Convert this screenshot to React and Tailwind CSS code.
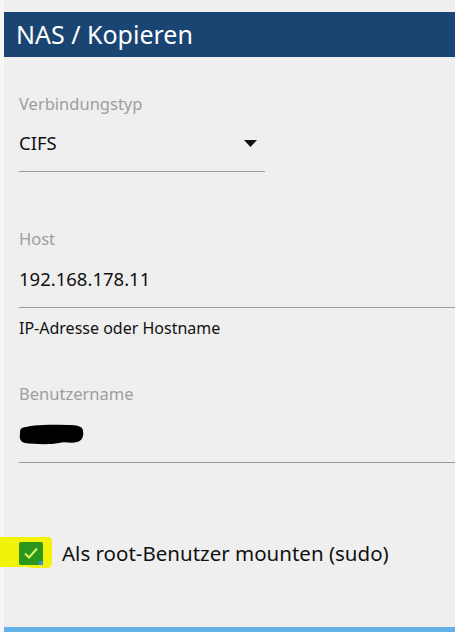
import { useState } from 'react'

const font = { fontFamily: '"Noto Sans", "Open Sans", sans-serif' }

function Field({ label, children, className = '' }) {
  return (
    <div className={className}>
      <div className="h-[20px] text-[16.5px] leading-[20px] text-[#9e9e9e]">{label}</div>
      {children}
    </div>
  )
}

export default function App() {
  const [asRoot, setAsRoot] = useState(true)

  return (
    <div className="h-[632px] w-full bg-[#f6f6f6] pl-[4px] overflow-hidden" style={font}>
      <div className="flex h-full flex-col bg-[#efefef] pt-[12px]">
        {/* Header */}
        <div className="flex h-[45px] items-center bg-[#1a4472] px-[12px] text-[25px] text-white">
          NAS / Kopieren
        </div>

        <div className="flex flex-col pl-[15px]">
          {/* Verbindungstyp */}
          <Field label="Verbindungstyp" className="mt-[37px]">
            <div className="mt-[17px] flex w-[246px] items-center justify-between border-b border-[#9a9a9a] pb-[16px] pr-[8px]">
              <span className="h-[24px] text-[18.5px] leading-[24px] text-[#111]">CIFS</span>
              <svg width="13" height="7" viewBox="0 0 13 7" aria-hidden="true">
                <path d="M0 0h13L6.5 7z" fill="#111" />
              </svg>
            </div>
          </Field>

          {/* Host */}
          <Field label="Host" className="mt-[57px]">
            <div className="mt-[18px] h-[41px] border-b border-[#9a9a9a] pb-[16px] text-[18.5px] leading-[24px] text-[#111]">
              192.168.178.11
            </div>
            <div className="mt-[10px] h-[20px] text-[16px] leading-[20px] text-[#111]">
              IP-Adresse oder Hostname
            </div>
          </Field>

          {/* Benutzername */}
          <Field label="Benutzername" className="mt-[46px]">
            <div className="mt-[18px] h-[41px] border-b border-[#9a9a9a] pb-[16px]">
              <svg width="66" height="24" viewBox="0 0 66 24" aria-hidden="true">
                <path
                  d="M3 6 C10 3 30 2 48 3 C58 3 64 4 64 9 C65 14 63 19 58 20 C52 22 46 19 40 21 C30 23 14 22 6 21 C2 20 0 17 1 12 C1 9 1 7 3 6 Z"
                  fill="#000"
                />
              </svg>
            </div>
          </Field>

          {/* Checkbox */}
          <label className="relative mt-[75px] flex h-[30px] cursor-pointer items-center">
            <span className="absolute left-[-19px] top-[-1px] h-[30px] w-[52px] rounded-r-[4px] bg-[#f2f20a]" />
            <span className="absolute left-[10px] top-[22px] h-[8px] w-[22px] rounded-b-[3px] bg-[#f2f20a]" />
            <input
              type="checkbox"
              className="sr-only"
              checked={asRoot}
              onChange={(e) => setAsRoot(e.target.checked)}
            />
            <span className="relative flex h-[23px] w-[24px] items-center justify-center rounded-[2px] bg-[#2a961c]">
              {asRoot && (
                <svg width="16" height="14" viewBox="0 0 16 14" aria-hidden="true">
                  <path d="M2 7.5l4 4 8-9" fill="none" stroke="#d8f06a" strokeWidth="2" />
                </svg>
              )}
              <span className="absolute bottom-0 right-0 h-[4px] w-[4px] bg-[#3a8fe0]" />
            </span>
            <span className="ml-[19px] text-[20.5px] text-[#111]">Als root-Benutzer mounten (sudo)</span>
          </label>
        </div>

        <div className="mt-auto h-[5px] bg-[#64b0e8]" />
      </div>
    </div>
  )
}
